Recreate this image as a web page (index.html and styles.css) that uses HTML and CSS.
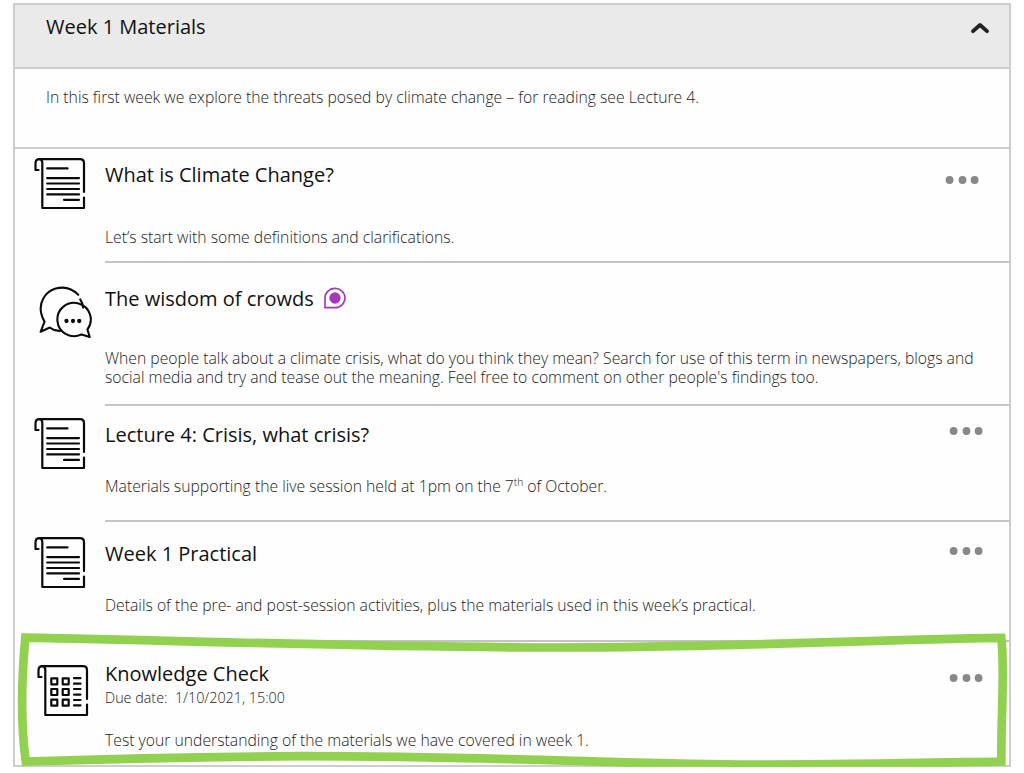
FILE: index.html
```html
<!DOCTYPE html>
<html lang="en">
<head>
  <meta charset="UTF-8" />
  <meta name="viewport" content="width=device-width, initial-scale=1.0" />
  <title>Week 1 Materials</title>
  <link rel="stylesheet" href="styles.css">
</head>
<body>
  <!-- shared icons -->
  <svg class="sprite" width="0" height="0">
    <symbol id="page" viewBox="0 0 54 54">
      <path d="M4.5 13H1.5V6.5Q1.5 2.2 5.5 2.2H46q4 0 4 4V35M50 40.5V51H8.3V6q0-3.8-3-3.8" />
    </symbol>
    <symbol id="document" viewBox="0 0 54 54">
      <use href="#page" width="54" height="54" />
      <path d="M13.2 11.4H33.5M13.2 21.1H45M13.2 26.5H45M13.2 32H45M13.2 37.4H45M30 42.8H45" />
    </symbol>
    <symbol id="dots" viewBox="0 0 34 10">
      <circle cx="4.6" cy="5" r="3.9" />
      <circle cx="17.5" cy="5" r="3.9" />
      <circle cx="29.6" cy="5" r="3.9" />
    </symbol>
  </svg>

  <div class="panel">
    <div class="panel-header">
      <h1>Week 1 Materials</h1>
      <svg class="chevron" viewBox="0 0 20 14">
        <path d="M3 10.2L10 4L17 10.2" />
      </svg>
    </div>

    <p class="intro">In this first week we explore the threats posed by climate change – for reading see Lecture 4.</p>

    <div class="item definitions">
      <svg class="icon"><use href="#document" /></svg>
      <div class="content">
        <h2>What is Climate Change?</h2>
        <p>Let’s start with some definitions and clarifications.</p>
        <svg class="more"><use href="#dots" /></svg>
      </div>
    </div>

    <div class="item crowds">
      <svg class="icon chat" viewBox="54 30 165 165">
        <path d="M177 60C158 40 133 34 108 41C75 51 56 84 64 117C66 127 69 134 74 142L62 173L90 160C100 168 111 171 123 170M183 74Q190 84 192 99" />
        <path d="M205 166L212 189L187 181A51 51 0 1 1 205 166Z" />
        <g class="chat-dots">
          <circle cx="141" cy="140" r="6.5" />
          <circle cx="161" cy="140" r="6.5" />
          <circle cx="180" cy="140" r="6.5" />
        </g>
      </svg>
      <div class="content">
        <h2>The wisdom of crowds
          <svg class="badge" viewBox="69 36 72 66">
            <path d="M75 98V70A30 29 0 1 1 105 98Z" />
            <circle cx="105" cy="69" r="17" />
          </svg>
        </h2>
        <p>When people talk about a climate crisis, what do you think they mean? Search for use of this term in newspapers, blogs and<br>social media and try and tease out the meaning. Feel free to comment on other people's findings too.</p>
      </div>
    </div>

    <div class="item lecture">
      <svg class="icon"><use href="#document" /></svg>
      <div class="content">
        <h2>Lecture 4: Crisis, what crisis?</h2>
        <p>Materials supporting the live session held at 1pm on the 7<sup>th</sup> of October.</p>
        <svg class="more"><use href="#dots" /></svg>
      </div>
    </div>

    <div class="item practical">
      <svg class="icon"><use href="#document" /></svg>
      <div class="content">
        <h2>Week 1 Practical</h2>
        <p>Details of the pre- and post-session activities, plus the materials used in this week’s practical.</p>
        <svg class="more"><use href="#dots" /></svg>
      </div>
    </div>

    <div class="item check">
      <svg class="icon" viewBox="0 0 54 54">
        <use href="#page" width="54" height="54" />
        <path d="M14.3 14.3h6v6h-6zM25.7 14.3h6v6h-6zM14.3 25h6v6h-6zM25.7 25h6v6h-6zM14.3 35.7h6v6h-6zM25.7 35.7h6v6h-6z" />
        <path d="M37 14.2h6.5M37 19.7h6.5M37 25h6.5M37 30.6h6.5M37 36h6.5M37 41.3h6.5" />
      </svg>
      <div class="content">
        <h2>Knowledge Check</h2>
        <div class="due">Due date:&nbsp; 1/10/2021, 15:00</div>
        <p>Test your understanding of the materials we have covered in week 1.</p>
        <svg class="more"><use href="#dots" /></svg>
      </div>
      <!-- hand drawn highlight -->
      <svg class="highlight" viewBox="15 630 1000 140">
        <path d="M25.3 637.7C200 641 380 647.5 560 647.5C720 647.5 860 640 1001.3 637.8C1005 670 1001 710 1001.3 761.5C920 763 840 765 740 764.5C600 763 480 756 300 756.2C190 757 110 759 25.8 761.5C20 720 21.5 680 25.3 637.7Z" />
      </svg>
    </div>
  </div>
</body>
</html>
```
FILE: styles.css
```css
* {
  box-sizing: border-box;
}

body {
  margin: 0;
  padding: 3px 0 0 13px;
  background-color: #fff;
  font-family: "Open Sans", sans-serif;
  color: #111;
}

.sprite {
  position: absolute;
}

.panel {
  width: 998px;
  height: 764px;
  border: 2px solid #cdcdcd;
  background-color: #fefefe;
}

h1, h2 {
  margin: 0;
  font-size: 20px;
  font-weight: 400;
  line-height: 28px;
}

p {
  margin: 0;
  font-size: 15.74px;
  font-weight: 300;
  line-height: 19px;
  color: #222;
}

.panel-header {
  display: flex;
  justify-content: space-between;
  height: 64px;
  padding: 8px 19px 0 31px;
  background-color: #eaeaea;
  border-bottom: 2px solid #cdcdcd;
}

.chevron {
  width: 20px;
  height: 14px;
  margin-top: 8px;
  fill: none;
  stroke: #222;
  stroke-width: 3.8;
  stroke-linecap: round;
  stroke-linejoin: round;
}

.intro {
  height: 80px;
  padding: 19px 31px;
  border-bottom: 2px solid #cdcdcd;
}

.item {
  position: relative;
  display: grid;
  grid-template-columns: 90px 1fr;
}

.icon {
  width: 54px;
  height: 54px;
  margin: 8px 0 0 19px;
  fill: none;
  stroke: #0a0a0a;
  stroke-width: 2.2;
  stroke-linecap: round;
  stroke-linejoin: round;
}

.content {
  position: relative;
  border-bottom: 2px solid #c4c4c4;
  white-space: nowrap;
}

.more {
  position: absolute;
  right: 26px;
  width: 34px;
  height: 10px;
  fill: #888;
}

.definitions {
  height: 114px;
}

.definitions .content {
  padding-top: 12px;
}

.definitions p {
  margin-top: 39px;
}

.definitions .more {
  top: 26px;
  right: 30px;
}

.crowds {
  height: 143px;
}

.crowds .content {
  padding-top: 22px;
}

.crowds h2 {
  display: flex;
  align-items: center;
  gap: 9px;
}

.crowds p {
  margin-top: 36px;
}

.chat {
  width: 54px;
  height: 54px;
  margin: 22px 0 0 23px;
  stroke-width: 6.3;
}

.chat-dots {
  fill: #0a0a0a;
  stroke: none;
}

.badge {
  width: 24px;
  height: 22px;
  margin-top: -2px;
  fill: #a33bb5;
}

.badge path {
  fill: none;
  stroke: #a33bb5;
  stroke-width: 5;
  stroke-linejoin: round;
}

.lecture {
  height: 116px;
}

.lecture .content {
  padding-top: 15px;
}

.lecture .icon {
  margin-top: 11px;
}

.lecture p, .practical p {
  margin-top: 28px;
}

.lecture .more {
  top: 20px;
}

sup {
  font-size: 10px;
  line-height: 0;
}

.practical {
  height: 120px;
}

.practical .content {
  padding-top: 18px;
}

.practical .icon {
  margin-top: 14px;
}

.practical .more {
  top: 24px;
}

.check {
  height: 123px;
}

.check .content {
  padding-top: 18px;
  border-bottom: none;
}

.check .icon {
  margin: 22px 0 0 22px;
}

.check p {
  margin-top: 23px;
}

.check .more {
  top: 31px;
}

.due {
  font-size: 14.35px;
  font-weight: 300;
  line-height: 20px;
  color: #222;
}

.highlight {
  position: absolute;
  top: -12px;
  left: 0;
  width: 1000px;
  height: 140px;
  fill: none;
  stroke: #92d050;
  stroke-width: 8.7;
  pointer-events: none;
}
```
